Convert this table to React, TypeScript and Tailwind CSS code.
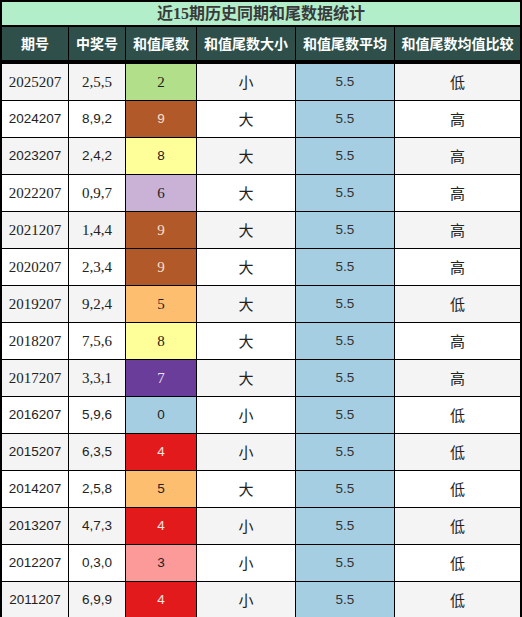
const rows = [
  { issue: "2025207", nums: "2,5,5", tail: "2", size: "小", cmp: "低", serif: true },
  { issue: "2024207", nums: "8,9,2", tail: "9", size: "大", cmp: "高", serif: false },
  { issue: "2023207", nums: "2,4,2", tail: "8", size: "大", cmp: "高", serif: false },
  { issue: "2022207", nums: "0,9,7", tail: "6", size: "大", cmp: "高", serif: true },
  { issue: "2021207", nums: "1,4,4", tail: "9", size: "大", cmp: "高", serif: true },
  { issue: "2020207", nums: "2,3,4", tail: "9", size: "大", cmp: "高", serif: true },
  { issue: "2019207", nums: "9,2,4", tail: "5", size: "大", cmp: "低", serif: true },
  { issue: "2018207", nums: "7,5,6", tail: "8", size: "大", cmp: "高", serif: true },
  { issue: "2017207", nums: "3,3,1", tail: "7", size: "大", cmp: "高", serif: true },
  { issue: "2016207", nums: "5,9,6", tail: "0", size: "小", cmp: "低", serif: false },
  { issue: "2015207", nums: "6,3,5", tail: "4", size: "小", cmp: "低", serif: false },
  { issue: "2014207", nums: "2,5,8", tail: "5", size: "大", cmp: "低", serif: false },
  { issue: "2013207", nums: "4,7,3", tail: "4", size: "小", cmp: "低", serif: false },
  { issue: "2012207", nums: "0,3,0", tail: "3", size: "小", cmp: "低", serif: false },
  { issue: "2011207", nums: "6,9,9", tail: "4", size: "小", cmp: "低", serif: false },
];

// tail digit -> cell colour
const tailStyle: Record<string, string> = {
  "0": "bg-[#a6cee3] text-[#222]",
  "2": "bg-[#b2df8a] text-[#222]",
  "3": "bg-[#fb9a99] text-[#222]",
  "4": "bg-[#e31a1c] text-[#fbe6e6]",
  "5": "bg-[#fdbf6f] text-[#222]",
  "6": "bg-[#cab2d6] text-[#222]",
  "7": "bg-[#6a3d9a] text-[#ece4f4]",
  "8": "bg-[#ffff99] text-[#222]",
  "9": "bg-[#b15928] text-[#f6e0d2]",
};

const headers = ["期号", "中奖号", "和值尾数", "和值尾数大小", "和值尾数平均", "和值尾数均值比较"];

const serif = "font-['Liberation_Serif',serif] text-[15px]";
const sans = "font-['Liberation_Sans',sans-serif] text-[13.5px]";
const cjk = "font-['Noto_Sans_CJK_SC',sans-serif]";

export default function App() {
  return (
    <div className="w-[522px] bg-black p-[2px] flex flex-col">
      <div className="h-[23px] mb-[2px] bg-[#b3eecb] flex items-center justify-center font-['Liberation_Serif','Noto_Sans_CJK_SC',serif] text-[16px] font-bold text-[#3a3a3a]">
        近15期历史同期和尾数据统计
      </div>
      <div className="grid grid-cols-[66px_56px_70px_98px_98px_125px] auto-rows-[36px] gap-px">
        {headers.map((h) => (
          <div
            key={h}
            className={`h-[33px] bg-[#2e4f4a] text-white font-bold text-[14px] flex items-center justify-center ${cjk}`}
          >
            {h}
          </div>
        ))}
        {rows.map((r, idx) => {
          const bg = idx % 2 === 0 ? "bg-[#f4f4f4]" : "bg-white";
          const num = r.serif ? serif : sans;
          return [
            <div key={r.issue + "a"} className={`${bg} ${num} text-[#222] flex items-center justify-center`}>
              {r.issue}
            </div>,
            <div key={r.issue + "b"} className={`${bg} ${num} text-[#222] flex items-center justify-center`}>
              {r.nums}
            </div>,
            <div key={r.issue + "c"} className={`${tailStyle[r.tail]} ${num} flex items-center justify-center`}>
              {r.tail}
            </div>,
            <div key={r.issue + "d"} className={`${bg} ${cjk} text-[15px] text-[#222] flex items-center justify-center`}>
              {r.size}
            </div>,
            <div key={r.issue + "e"} className={`bg-[#a6cee3] ${sans} text-[#333] flex items-center justify-center`}>
              5.5
            </div>,
            <div key={r.issue + "f"} className={`${bg} ${cjk} text-[15px] text-[#222] flex items-center justify-center`}>
              {r.cmp}
            </div>,
          ];
        })}
      </div>
    </div>
  );
}
